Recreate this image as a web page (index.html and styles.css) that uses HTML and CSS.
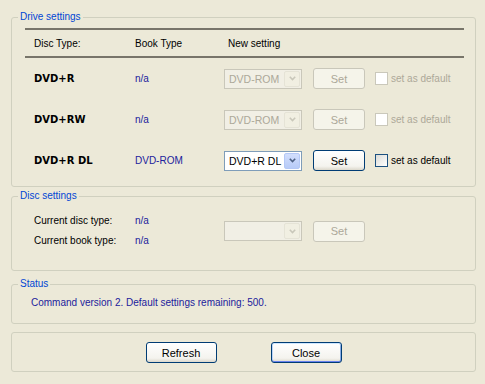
FILE: index.html
```html
<!DOCTYPE html>
<html>
<head>
<meta charset="utf-8">
<link rel="stylesheet" href="styles.css">
</head>
<body>
<div class="dialog">
  <section class="group drive">
    <span class="legend">Drive settings</span>
    <div class="table">
      <div class="rule"></div>
      <div class="row head">
        <span class="c1">Disc Type:</span><span class="c2">Book Type</span><span class="c3">New setting</span>
      </div>
      <div class="rule"></div>
      <div class="row item">
        <span class="c1 disc">DVD+R</span><span class="c2 val">n/a</span>
        <div class="combo disabled"><span class="combo-text">DVD-ROM</span><span class="combo-btn"><svg width="7" height="5" viewBox="0 0 7 5"><path d="M0.8 0.8 L3.5 3.5 L6.2 0.8" fill="none" stroke="currentColor" stroke-width="1.6"/></svg></span></div>
        <button class="btn small" disabled>Set</button>
        <label class="check disabled"><span class="box"></span>set as default</label>
      </div>
      <div class="row item">
        <span class="c1 disc">DVD+RW</span><span class="c2 val">n/a</span>
        <div class="combo disabled"><span class="combo-text">DVD-ROM</span><span class="combo-btn"><svg width="7" height="5" viewBox="0 0 7 5"><path d="M0.8 0.8 L3.5 3.5 L6.2 0.8" fill="none" stroke="currentColor" stroke-width="1.6"/></svg></span></div>
        <button class="btn small" disabled>Set</button>
        <label class="check disabled"><span class="box"></span>set as default</label>
      </div>
      <div class="row item">
        <span class="c1 disc">DVD+R DL</span><span class="c2 val">DVD-ROM</span>
        <div class="combo"><span class="combo-text">DVD+R DL</span><span class="combo-btn"><svg width="7" height="5" viewBox="0 0 7 5"><path d="M0.8 0.8 L3.5 3.5 L6.2 0.8" fill="none" stroke="currentColor" stroke-width="1.6"/></svg></span></div>
        <button class="btn small">Set</button>
        <label class="check"><span class="box"></span>set as default</label>
      </div>
    </div>
  </section>

  <section class="group disc-group">
    <span class="legend">Disc settings</span>
    <div class="disc-body">
      <div class="labels">
        <span>Current disc type:</span>
        <span>Current book type:</span>
      </div>
      <div class="values">
        <span class="val">n/a</span>
        <span class="val">n/a</span>
      </div>
      <div class="combo disabled tall"><span class="combo-text"></span><span class="combo-btn"><svg width="7" height="5" viewBox="0 0 7 5"><path d="M0.8 0.8 L3.5 3.5 L6.2 0.8" fill="none" stroke="currentColor" stroke-width="1.6"/></svg></span></div>
      <button class="btn small" disabled>Set</button>
    </div>
  </section>

  <section class="group status">
    <span class="legend">Status</span>
    <p class="status-text">Command version 2. Default settings remaining: 500.</p>
  </section>

  <section class="group actions">
    <button class="btn wide">Refresh</button>
    <button class="btn wide default">Close</button>
  </section>
</div>
</body>
</html>
```

FILE: styles.css
```css
html, body {
  margin: 0;
  padding: 0;
}
body {
  width: 485px;
  height: 384px;
  overflow: hidden;
  background: #ECE9D8;
  font-family: "Liberation Sans", Arial, sans-serif;
  font-size: 10px;
  color: #000;
}
.dialog {
  display: flex;
  flex-direction: column;
}
.group {
  position: relative;
  margin: 0 9px 0 11px;
  border: 1px solid #D0D0BF;
  border-radius: 3px;
}
.legend {
  position: absolute;
  left: 6px;
  top: -8px;
  padding: 0 2px;
  line-height: 14px;
  background: #ECE9D8;
  color: #0046D5;
}
.drive {
  margin-top: 17px;
  padding: 10px 0 5px 0;
}
.table {
  margin: 0 10px 0 13px;
  width: 439px;
}
.rule {
  height: 2px;
  background: #78756A;
}
.row {
  display: flex;
  align-items: center;
  padding-left: 9px;
}
.head {
  height: 26px;
}
.item {
  height: 41px;
}
.c1 {
  width: 101px;
  flex: none;
}
.c2 {
  width: 89px;
  flex: none;
}
.c3 {
  padding-left: 4px;
}
.disc {
  font-family: "DejaVu Sans", sans-serif;
  font-weight: bold;
  font-size: 10px;
}
.val {
  color: #21219C;
}
.combo {
  box-sizing: border-box;
  width: 78px;
  height: 20px;
  flex: none;
  margin-right: 11px;
  border: 1px solid #7F9DB9;
  background: #fff;
  display: flex;
  align-items: stretch;
}
.combo-text {
  flex: 1;
  min-width: 0;
  overflow: hidden;
  white-space: nowrap;
  padding-left: 4px;
  line-height: 18px;
  font-size: 10.5px;
}
.combo-btn {
  box-sizing: border-box;
  width: 16px;
  flex: none;
  margin: 1px;
  border: 1px solid #B4C8F6;
  border-radius: 2px;
  background: linear-gradient(#D2DEFC, #B7CBF8);
  color: #4D6185;
  display: flex;
  align-items: center;
  justify-content: center;
}
.combo.disabled {
  border-color: #C9C7BA;
  background: #F1EFE5;
}
.combo.disabled .combo-text {
  color: #ACA899;
}
.combo.disabled .combo-btn {
  border-color: #E5E3D6;
  background: #F1EFE2;
  color: #C9C7BA;
}
.btn {
  box-sizing: border-box;
  height: 21px;
  flex: none;
  padding: 0;
  font-family: "Liberation Sans", Arial, sans-serif;
  font-size: 11px;
  color: #000;
  border: 1px solid #003C74;
  border-radius: 3px;
  background: linear-gradient(#FFFFFF, #F4F3EE 80%, #DCD8CC);
}
.btn.small {
  width: 52px;
  margin-right: 10px;
}
.btn.wide {
  width: 71px;
}
.btn.default {
  box-shadow: inset 0 1px 0 #CEE7FF, inset 0 -1px 0 #6982EE, inset 1px 0 0 #BCD4F6, inset -1px 0 0 #89ADE4;
}
.btn:disabled {
  border-color: #C9C7BA;
  background: #F5F4EA;
  color: #ACA899;
}
.check {
  display: flex;
  align-items: center;
  white-space: nowrap;
}
.box {
  box-sizing: border-box;
  width: 13px;
  height: 13px;
  margin-right: 3px;
  border: 1px solid #1C5180;
  background: linear-gradient(135deg, #DCDCD7, #FFFFFF);
}
.check.disabled {
  color: #ACA899;
}
.check.disabled .box {
  border-color: #CAC8BB;
  background: #FFFFFF;
}
.disc-group {
  margin-top: 9px;
  padding: 14px 0 19px 22px;
}
.disc-body {
  display: flex;
  align-items: center;
}
.labels, .values {
  display: flex;
  flex-direction: column;
  line-height: 20px;
  flex: none;
}
.labels {
  width: 101px;
}
.values {
  width: 89px;
}
.status {
  margin-top: 13px;
  padding: 11px 0 13px 19px;
}
.status-text {
  margin: 0;
  line-height: 14px;
  color: #21219C;
}
.actions {
  margin-top: 8px;
  padding: 9px 0 8px 0;
  display: flex;
  justify-content: center;
  gap: 54px;
}
```
